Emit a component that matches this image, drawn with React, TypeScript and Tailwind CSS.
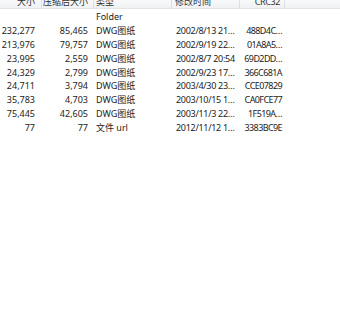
import React from 'react';

interface Row {
  size: string;
  packed: string;
  type: string;
  modified: string;
  crc: string;
}

const rows: Row[] = [
  { size: '', packed: '', type: 'Folder', modified: '', crc: '' },
  { size: '232,277', packed: '85,465', type: 'DWG图纸', modified: '2002/8/13 21…', crc: '488D4C…' },
  { size: '213,976', packed: '79,757', type: 'DWG图纸', modified: '2002/9/19 22…', crc: '01A8A5…' },
  { size: '23,995', packed: '2,559', type: 'DWG图纸', modified: '2002/8/7 20:54', crc: '69D2DD…' },
  { size: '24,329', packed: '2,799', type: 'DWG图纸', modified: '2002/9/23 17…', crc: '366C681A' },
  { size: '24,711', packed: '3,794', type: 'DWG图纸', modified: '2003/4/30 23…', crc: 'CCE07829' },
  { size: '35,783', packed: '4,703', type: 'DWG图纸', modified: '2003/10/15 1…', crc: 'CA0FCE77' },
  { size: '75,445', packed: '42,605', type: 'DWG图纸', modified: '2003/11/3 22…', crc: '1F519A…' },
  { size: '77', packed: '77', type: '文件 url', modified: '2012/11/12 1…', crc: '3383BC9E' },
];

const font = "font-['Noto_Sans','Noto_Sans_CJK_SC',sans-serif]";

export default function App() {
  return (
    <div className={`w-[340px] h-[320px] bg-white overflow-hidden text-[9px] text-[#222] ${font}`}>
      <div className="-mt-[6px] h-[15px] flex bg-gradient-to-b from-white to-[#f0f1f3] border-b border-[#e3e5e8] text-[#333]">
        <div className="w-[42px] border-r border-[#dcdfe3] text-right pr-[6px] leading-[15px]">大小</div>
        <div className="w-[52px] border-r border-[#dcdfe3] text-right pr-[5px] leading-[15px]">压缩后大小</div>
        <div className="w-[78px] border-r border-[#dcdfe3] pl-[2px] leading-[15px]">类型</div>
        <div className="w-[68px] border-r border-[#dcdfe3] pl-[3px] leading-[15px]">修改时间</div>
        <div className="w-[45px] border-r border-[#dcdfe3] text-right pr-[4px] leading-[15px] tracking-[-0.4px]">CRC32</div>
        <div className="flex-1" />
      </div>
      <div className="pt-[1px]">
        {rows.map((r, i) => (
          <div key={i} className="flex h-[13.875px] leading-[13.875px] whitespace-nowrap">
            <div className="w-[42px] text-right pr-[7px]">{r.size}</div>
            <div className="w-[52px] text-right pr-[6px]">{r.packed}</div>
            <div className="w-[78px] pl-[2px]">{r.type}</div>
            <div className="w-[68px] pl-[4px] overflow-hidden tracking-[-0.3px]">{r.modified}</div>
            <div className="w-[45px] text-right pr-[3px] tracking-[-0.6px]">{r.crc}</div>
          </div>
        ))}
      </div>
    </div>
  );
}
